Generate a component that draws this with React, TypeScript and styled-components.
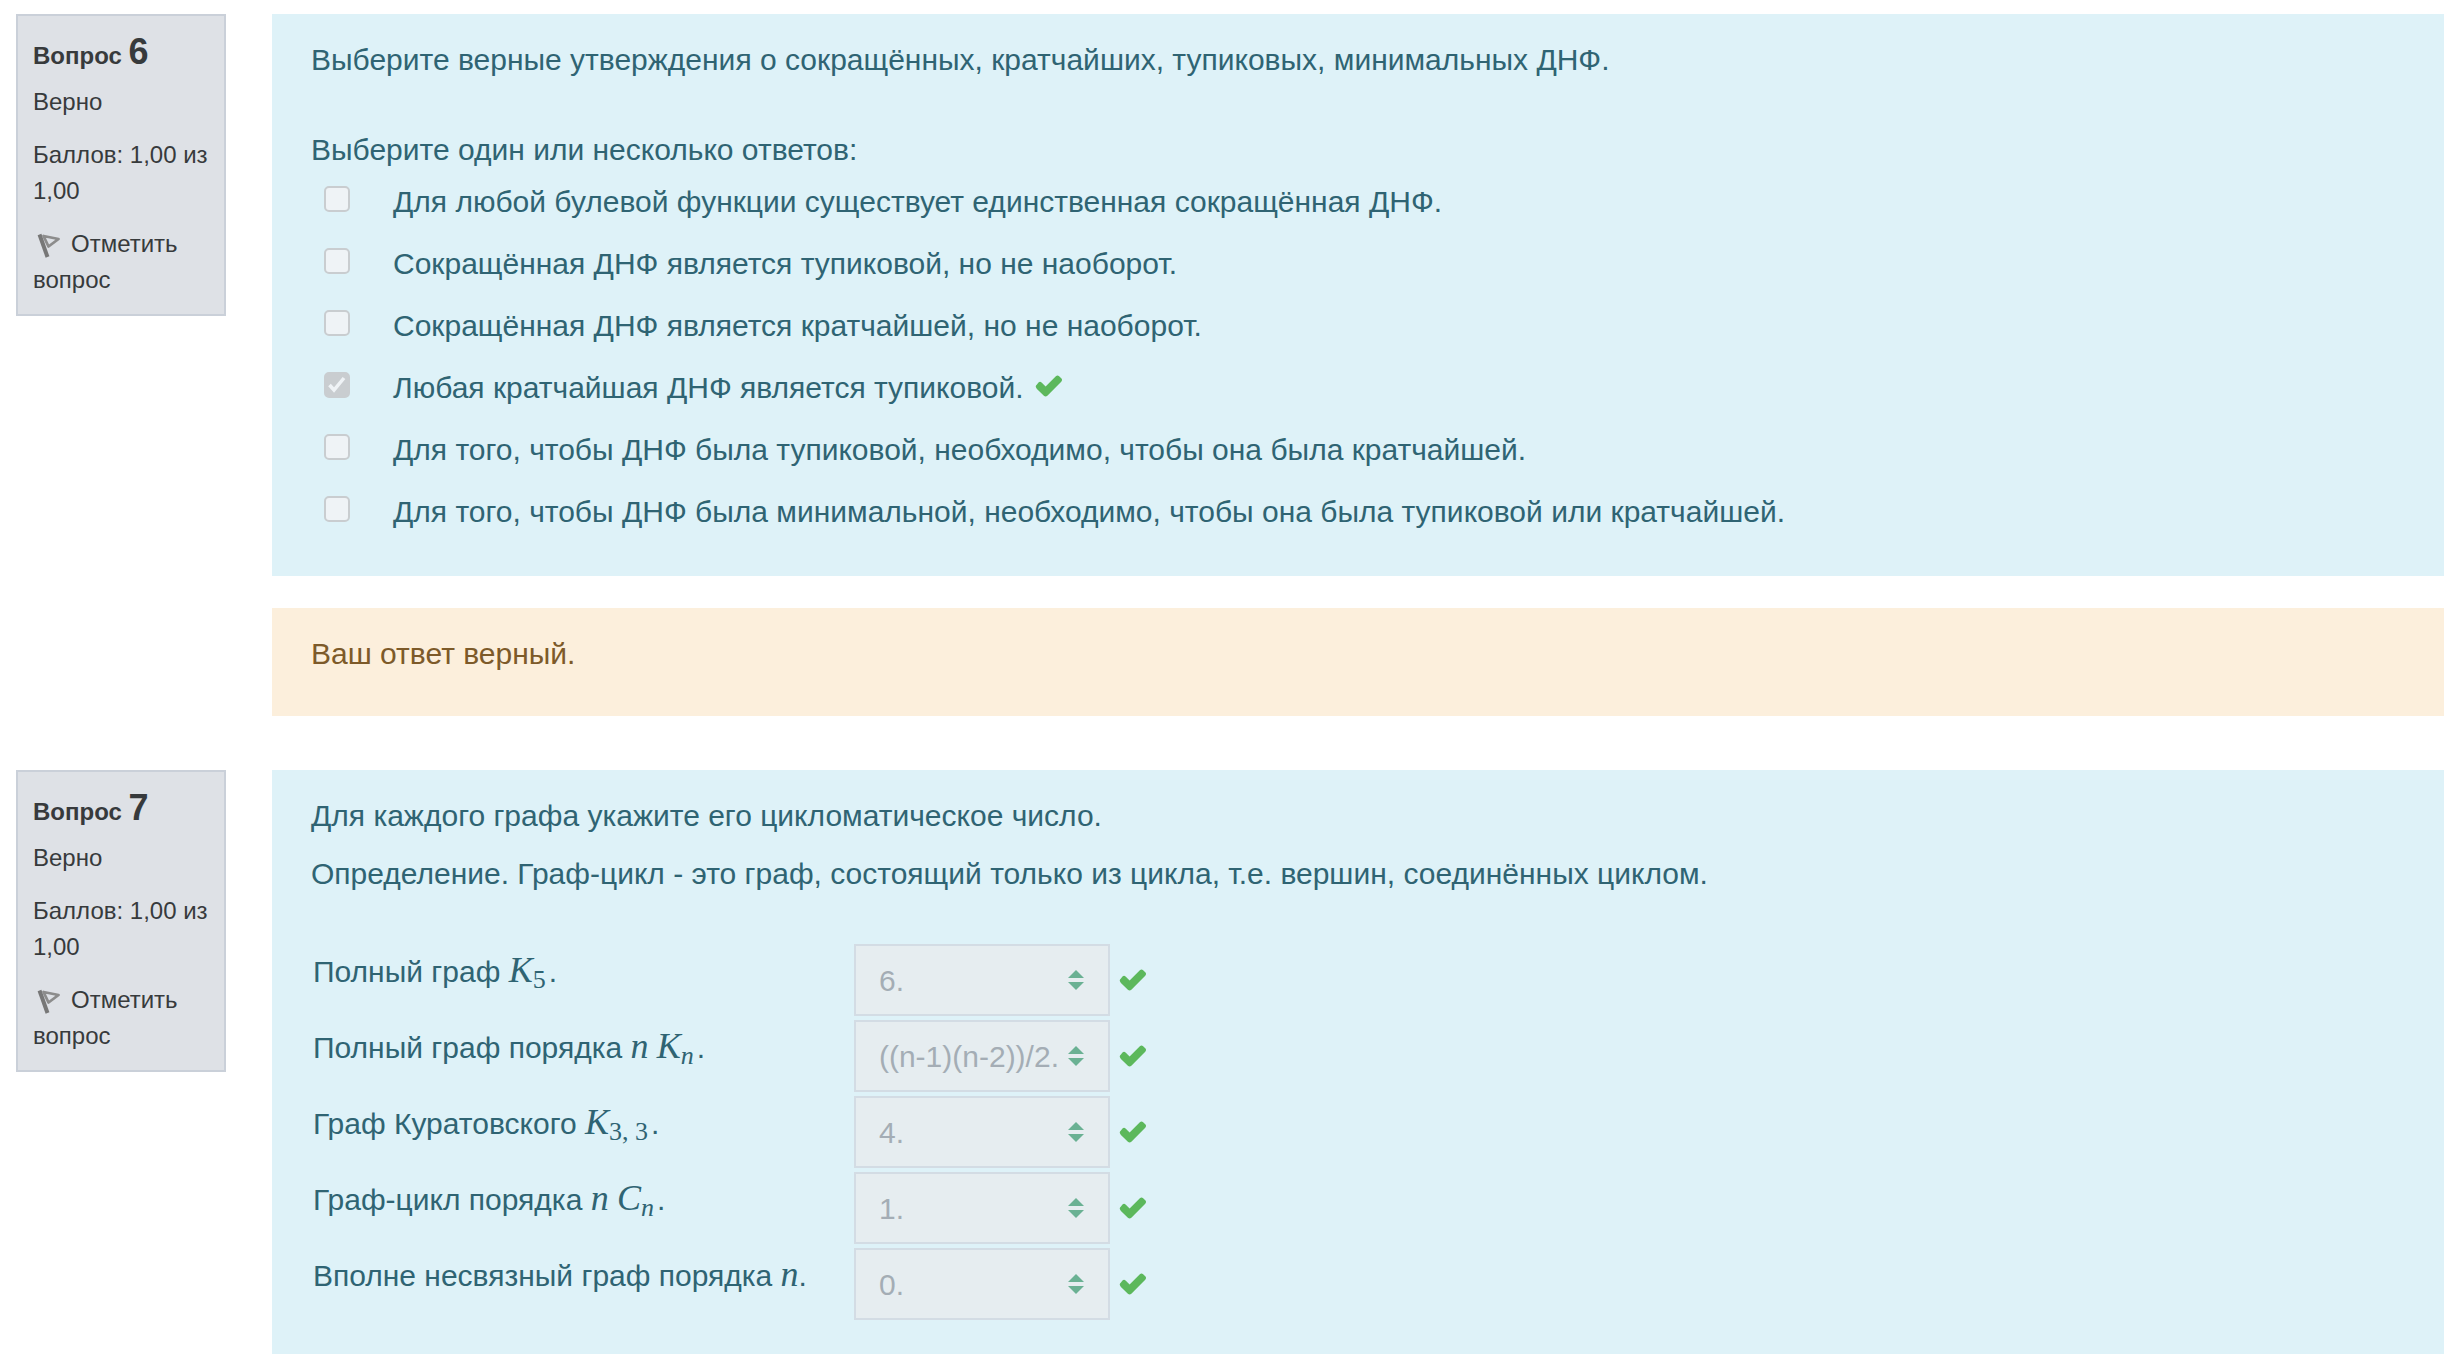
import React, { useId } from 'react';
import styled, { createGlobalStyle } from 'styled-components';

const GlobalStyle = createGlobalStyle`
  *, *::before, *::after { box-sizing: border-box; }
  body {
    margin: 0;
    background: #fff;
    color: #373a3c;
    font: 30px/45px "Liberation Sans", Arial, sans-serif;
  }
`;

const Page = styled.main`
  display: flex;
  flex-direction: column;
  gap: 54px;
  padding: 14px 18px 14px 16px;
`;

const Question = styled.section`
  display: flex;
  align-items: flex-start;
  gap: 46px;
`;

const Info = styled.aside`
  flex: none;
  width: 210px;
  padding: 15px 12px 16px 15px;
  border: 2px solid #cad0d9;
  background: #dee1e6;
  font-size: 24px;
  line-height: 36px;
`;

const Number = styled.h3`
  margin: 0 0 7px;
  font-size: 24px;
  line-height: 42px;
  font-weight: 700;
`;

const Digit = styled.span`
  font-size: 36px;
`;

const State = styled.div`
  margin-bottom: 17px;
`;

const Flag = styled.button`
  display: block;
  margin: 0;
  padding: 0;
  border: 0;
  background: none;
  color: inherit;
  font: inherit;
  text-align: left;
  cursor: pointer;

  svg {
    width: 32px;
    height: 28px;
    margin-right: 6px;
    vertical-align: -7px;
  }
`;

const Content = styled.div`
  flex: 1;
  min-width: 0;
  display: flex;
  flex-direction: column;
  gap: 32px;
`;

const Panel = styled.div<{ $tone: 'info' | 'feedback'; $bottom: number }>`
  padding: 23px 39px ${p => p.$bottom}px;
  background: ${p => (p.$tone === 'info' ? '#def2f8' : '#fcefdc')};
  color: ${p => (p.$tone === 'info' ? '#2f6473' : '#7d5a29')};
`;

const Text = styled.p<{ $gap?: number }>`
  margin: 0 0 ${p => p.$gap ?? 0}px;
`;

const Options = styled.fieldset`
  margin: 0;
  padding: 0;
  border: 0;
`;

const Legend = styled.legend`
  padding: 0;
  margin-bottom: 7px;
`;

const OptionList = styled.div`
  display: flex;
  flex-direction: column;
  gap: 17px;
`;

const Option = styled.div`
  display: flex;
  align-items: flex-start;
  padding-left: 13px;
`;

const Checkbox = styled.input`
  appearance: none;
  flex: none;
  width: 26px;
  height: 26px;
  margin: 7px 43px 0 0;
  border: 2px solid #c9cdd0;
  border-radius: 5px;
  background: #eff3f6;

  &:checked {
    background: #c9cdd0 url("data:image/svg+xml,%3Csvg xmlns='http://www.w3.org/2000/svg' viewBox='0 0 22 22'%3E%3Cpath d='M3.500 11l4.500 5L18 4' fill='none' stroke='%23eff3f6' stroke-width='3.500' stroke-linejoin='miter'/%3E%3C/svg%3E") center / 22px 22px no-repeat;
  }
`;

const Tick = styled.svg`
  width: 28px;
  height: 22px;
  fill: #5cb85c;
`;

const OptionTick = styled(Tick)`
  margin: 10px 0 0 11px;
`;

const Table = styled.table`
  border-collapse: collapse;
  margin-top: 46px;
`;

const LabelCell = styled.th`
  padding: 7px 47px 0 2px;
  font-weight: 400;
  text-align: left;
  vertical-align: top;
`;

const AnswerCell = styled.td`
  padding: 2px 0;
`;

const Answer = styled.div`
  display: flex;
  align-items: center;
  gap: 9px;
`;

const Select = styled.select`
  appearance: none;
  width: 256px;
  height: 72px;
  padding: 0 46px 0 23px;
  border: 2px solid #d3dce4;
  border-radius: 0;
  background: #e6edf0 url("data:image/svg+xml,%3Csvg xmlns='http://www.w3.org/2000/svg' viewBox='0 0 16 20'%3E%3Cpath d='M0 8L8 0l8 8zM0 12h16l-8 8z' fill='%236ab193'/%3E%3C/svg%3E") right 24px center / 16px 20px no-repeat;
  color: #a4adb5;
  font: inherit;
  opacity: 1;
`;

const Var = styled.i`
  font: italic 36px/36px "Liberation Serif", "Times New Roman", serif;
`;

const Sub = styled.sub<{ $italic?: boolean }>`
  margin-right: 3px;
  font: ${p => (p.$italic ? 'italic' : 'normal')} 26px/26px "Liberation Serif", "Times New Roman", serif;
  vertical-align: -6px;
`;

const tickPath = 'M2 9.500Q-.5 11.500 2 14L9.200 21.200Q11 22.800 12.800 21.200L27.200 6.500Q28.800 4.800 27.200 3L25 .8Q23.300-.7 21.600 .8L11 11.500 6.800 7.300Q5.200 5.800 3.600 7.300Z';

function InfoBox({ number }: { number: number }) {
  return (
    <Info>
      <Number>Вопрос <Digit>{number}</Digit></Number>
      <State>Верно</State>
      <State>Баллов: 1,00 из 1,00</State>
      <Flag type="button">
        <svg viewBox="0 0 32 28" fill="none" aria-hidden="true">
          <path d="M6.500 3.500l8 22.500" stroke="#777" strokeWidth="4" />
          <path d="M10.500 5l15 3-10 7.500z" stroke="#8c8c8c" strokeWidth="2.800" strokeLinejoin="round" />
        </svg>
        Отметить вопрос
      </Flag>
    </Info>
  );
}

const options = [
  { text: 'Для любой булевой функции существует единственная сокращённая ДНФ.' },
  { text: 'Сокращённая ДНФ является тупиковой, но не наоборот.' },
  { text: 'Сокращённая ДНФ является кратчайшей, но не наоборот.' },
  { text: 'Любая кратчайшая ДНФ является тупиковой.', chosen: true },
  { text: 'Для того, чтобы ДНФ была тупиковой, необходимо, чтобы она была кратчайшей.' },
  { text: 'Для того, чтобы ДНФ была минимальной, необходимо, чтобы она была тупиковой или кратчайшей.' },
];

const matches = [
  { label: <>Полный граф <Var>K</Var><Sub>5</Sub>.</>, answer: '6.' },
  { label: <>Полный граф порядка <Var>n</Var> <Var>K</Var><Sub $italic>n</Sub>.</>, answer: '((n-1)(n-2))/2.' },
  { label: <>Граф Куратовского <Var>K</Var><Sub>3, 3</Sub>.</>, answer: '4.' },
  { label: <>Граф-цикл порядка <Var>n</Var> <Var>C</Var><Sub $italic>n</Sub>.</>, answer: '1.' },
  { label: <>Вполне несвязный граф порядка <Var>n</Var>.</>, answer: '0.' },
];

export default function App() {
  const id = useId();
  return (
    <>
      <GlobalStyle />
      <Page>
        <Question>
          <InfoBox number={6} />
          <Content>
            <Panel $tone="info" $bottom={42}>
              <Text $gap={45}>
                Выберите верные утверждения о сокращённых, кратчайших, тупиковых, минимальных ДНФ.
              </Text>
              <Options>
                <Legend>Выберите один или несколько ответов:</Legend>
                <OptionList>
                  {options.map((o, i) => (
                    <Option key={o.text}>
                      <Checkbox type="checkbox" id={`${id}o${i}`} defaultChecked={o.chosen} disabled />
                      <label htmlFor={`${id}o${i}`}>{o.text}</label>
                      {o.chosen && (
                        <OptionTick viewBox="0 0 29 22" role="img" aria-label="Верно"><path d={tickPath} /></OptionTick>
                      )}
                    </Option>
                  ))}
                </OptionList>
              </Options>
            </Panel>
            <Panel $tone="feedback" $bottom={40}>
              <Text>Ваш ответ верный.</Text>
            </Panel>
          </Content>
        </Question>

        <Question>
          <InfoBox number={7} />
          <Content>
            <Panel $tone="info" $bottom={32}>
              <Text $gap={13}>Для каждого графа укажите его цикломатическое число.</Text>
              <Text>Определение. Граф-цикл - это граф, состоящий только из цикла, т.е. вершин, соединённых циклом.</Text>
              <Table>
                <tbody>
                  {matches.map((m, i) => (
                    <tr key={i}>
                      <LabelCell scope="row"><label htmlFor={`${id}m${i}`}>{m.label}</label></LabelCell>
                      <AnswerCell>
                        <Answer>
                          <Select id={`${id}m${i}`} defaultValue={m.answer} disabled>
                            <option>{m.answer}</option>
                          </Select>
                          <Tick viewBox="0 0 29 22" role="img" aria-label="Верно"><path d={tickPath} /></Tick>
                        </Answer>
                      </AnswerCell>
                    </tr>
                  ))}
                </tbody>
              </Table>
            </Panel>
          </Content>
        </Question>
      </Page>
    </>
  );
}
